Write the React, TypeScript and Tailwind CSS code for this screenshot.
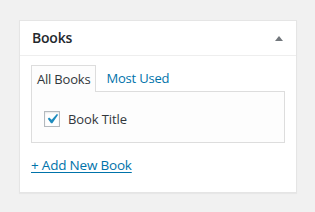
export default function App() {
  return (
    <div className="w-[315px] h-[212px] bg-[#f1f1f1] pt-[20px] pl-[19px]" style={{ fontFamily: '"Open Sans", "Noto Sans", sans-serif' }}>
      <div className="w-[278px] h-[173px] bg-white border border-[#e5e5e5] shadow-[0_1px_1px_rgba(0,0,0,0.04)]">
        <div className="h-[35px] border-b border-[#eeeeee] flex items-center justify-between pl-[12px] pr-[13px]">
          <span className="text-[14px] font-semibold text-[#23282d] leading-none tracking-[-0.2px]">Books</span>
          <svg width="8" height="5" viewBox="0 0 8 5" className="block">
            <polygon points="4,0 8,5 0,5" fill="#72777c" />
          </svg>
        </div>
        <div className="pl-[11px] pr-[11px] pt-[8px]">
          <div className="flex items-end">
            <div className="h-[27px] border border-b-0 border-[#dddddd] bg-[#fdfdfd] px-[5px] pt-[2px] flex items-center text-[13px] text-[#32373c] relative z-10 -mb-px tracking-[-0.2px]">
              All Books
            </div>
            <div className="h-[27px] pl-[10px] pt-[2px] flex items-center text-[13px] text-[#0073aa] tracking-[-0.2px]">Most Used</div>
          </div>
          <div className="h-[52px] border border-[#dddddd] bg-[#fdfdfd] pl-[12px] pt-[19px]">
            <div className="flex items-center">
              <span className="relative w-[16px] h-[16px] border border-[#b4b9be] bg-white shadow-[inset_0_1px_2px_rgba(0,0,0,0.1)]">
                <svg width="20" height="20" viewBox="0 0 20 20" className="absolute left-[-3px] top-[-3px]">
                  <path d="M14.83 4.89l1.34.94-5.81 8.38H9.02L5.78 9.67l1.34-1.25 2.57 2.4z" fill="#1e8cbe" />
                </svg>
              </span>
              <span className="ml-[8px] text-[13px] text-[#32373c] leading-none tracking-[-0.1px]">Book Title</span>
            </div>
          </div>
          <div className="mt-[9px]">
            <a className="text-[13.5px] text-[#0073aa] underline underline-offset-2 leading-none tracking-[-0.2px]" href="#">+ Add New Book</a>
          </div>
        </div>
      </div>
    </div>
  );
}
